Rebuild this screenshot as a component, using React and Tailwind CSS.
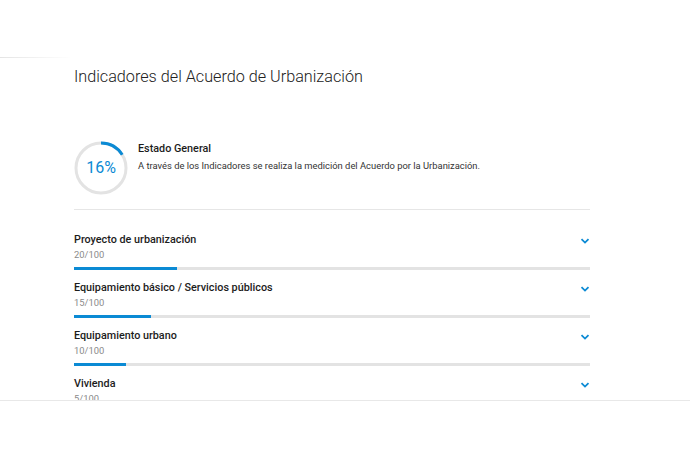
import React from 'react';

const items = [
  { name: 'Proyecto de urbanización', value: 20 },
  { name: 'Equipamiento básico / Servicios públicos', value: 15 },
  { name: 'Equipamiento urbano', value: 10 },
  { name: 'Vivienda', value: 5 },
];

const Chevron = () => (
  <svg width="10" height="6" viewBox="0 0 10 6" fill="none" className="mt-[2px]">
    <path d="M1.5 1.2 L5 4.6 L8.5 1.2" stroke="#0b8ad4" strokeWidth="1.8" />
  </svg>
);

const Ring = ({ percent }) => {
  const r = 25;
  const c = 2 * Math.PI * r;
  return (
    <div className="relative w-[54px] h-[54px] shrink-0">
      <svg width="54" height="54" viewBox="0 0 54 54" className="-rotate-90">
        <circle cx="27" cy="27" r={r} fill="none" stroke="#e3e3e3" strokeWidth="3" />
        <circle
          cx="27"
          cy="27"
          r={r}
          fill="none"
          stroke="#0b8ad4"
          strokeWidth="3"
          strokeDasharray={`${(c * percent) / 100} ${c}`}
        />
      </svg>
      <span className="absolute inset-0 flex items-center justify-center text-[16px] text-[#0b8ad4]">
        {percent}%
      </span>
    </div>
  );
};

export default function App() {
  return (
    <div className="w-[690px] h-[460px] bg-white font-['Roboto',sans-serif] text-[#1c1c1c]">
      <div className="h-[401px] overflow-hidden border-b border-[#e8e8e8]">
        {/* faint header edge */}
        <div className="mt-[57px] h-px w-[72px] bg-gradient-to-r from-[#e4e4e4] to-transparent" />

        <div className="ml-[74px] w-[516px]">
          <h1 className="mt-[7px] text-[16.2px] leading-[24px] font-light text-[#222]">
            Indicadores del Acuerdo de Urbanización
          </h1>

          {/* Estado general */}
          <div className="mt-[52px] flex items-start gap-[10px] pb-[14px] border-b border-[#e6e6e6]">
            <Ring percent={16} />
            <div className="pt-[1px]">
              <p className="text-[10.8px] leading-[14px] font-medium">Estado General</p>
              <p className="mt-[3px] text-[9.4px] leading-[14px] text-[#333]">
                A través de los Indicadores se realiza la medición del Acuerdo por la Urbanización.
              </p>
            </div>
          </div>

          {/* Indicadores */}
          <div className="pt-[22px] flex flex-col gap-[10px]">
            {items.map((it) => (
              <div key={it.name}>
                <div className="flex items-center justify-between">
                  <p className="text-[10.8px] leading-[16px] font-medium">{it.name}</p>
                  <Chevron />
                </div>
                <p className="text-[9.4px] leading-[14px] text-[#8a8a8a]">{it.value}/100</p>
                <div className="mt-[5px] h-[3px] bg-[#e3e3e3]">
                  <div className="h-full bg-[#0b8ad4]" style={{ width: `${it.value}%` }} />
                </div>
              </div>
            ))}
          </div>
        </div>
      </div>
    </div>
  );
}
